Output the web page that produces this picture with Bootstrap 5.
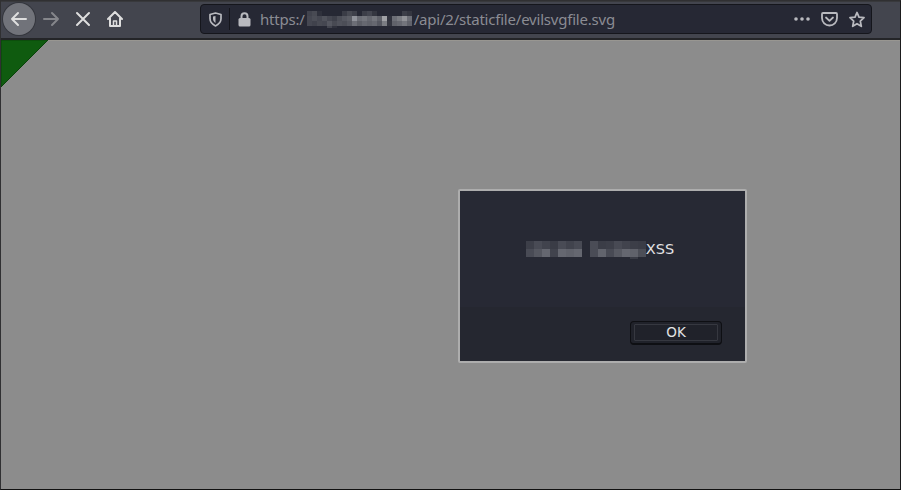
<!DOCTYPE html>
<html lang="en">
<head>
<meta charset="utf-8">
<meta name="viewport" content="width=device-width, initial-scale=1">
<title>evilsvgfile.svg</title>
<link href="https://cdn.jsdelivr.net/npm/bootstrap@5.3.0/dist/css/bootstrap.min.css" rel="stylesheet">
<style>
html, body { height: 100%; }
body { background: #8c8c8c; overflow: hidden; font-family: "Noto Sans", sans-serif; }
.browser { height: 490px; border: 1px solid #303032; border-right-color: #1b1b1d; border-bottom-color: #111; }
.toolbar { height: 39px; padding-bottom: 2px; background: #43454e; border-top: 1px solid #38393c; border-bottom: 2px solid #242528; flex: none; }
.tool { width: 32px; height: 32px; padding: 0; border: 0; border-radius: 50%; color: #dedede; display: flex; align-items: center; justify-content: center; flex: none; }
.tool.back { background: #71737a; box-shadow: 0 0 0 1px #34363d; margin-left: 1.5px; }
.tool.forward { color: #85868b; }
.tool svg, .address svg { display: block; flex: none; }
.address { width: 672px; height: 30px; margin-left: 69.5px; padding-right: 5px; background: #262834; border: 1px solid #15161c; border-radius: 4px; color: #b9babf; }
.split { width: 1px; height: 22px; background: #14151b; margin: 0 8px 0 7px; }
.url { font-size: 15px; letter-spacing: -.21px; line-height: 22px; color: #8b8c93; white-space: pre; margin-left: 9px; }
#hostMosaic { margin-left: -3px; margin-top: 1px; }
.page-icons { gap: 10px; }
.viewport { background: #8c8c8c; border-top: 1px solid #989691; }
.shape { display: block; margin-top: -1px; }
.alert-box { left: 457px; top: 148px; width: 289px; height: 174px; background: #272934; border: 2px solid #adadad; border-radius: 2px; font-family: "DejaVu Sans", sans-serif; color: #e2e2e4; }
.alert-text { height: 116px; padding-top: 2px; padding-right: 5px; font-size: 14.5px; }
.alert-actions { background: #252730; padding-right: 23px; padding-bottom: 2px; }
.ok { width: 92px; height: 24px; padding: 2px 3px; background: #20222a; border: 1px solid #0e0f13; border-bottom-width: 2px; border-radius: 4px; color: #e2e2e4; font-size: 13.5px; }
.ok span { display: flex; align-items: center; justify-content: center; height: 100%; border: 1px solid #363840; border-radius: 1px; }
</style>
<script src="https://cdn.jsdelivr.net/npm/bootstrap@5.3.0/dist/js/bootstrap.bundle.min.js"></script>
</head>
<body>
<div class="browser d-flex flex-column">
  <nav class="toolbar d-flex align-items-center" aria-label="Browser">
    <button class="tool back" aria-label="Back"><svg width="18" height="16" viewBox="0 0 18 16" fill="none" stroke="currentColor" stroke-width="2" stroke-linecap="round" stroke-linejoin="round"><path d="M16 8H2M8 2 2 8l6 6"/></svg></button>
    <button class="tool forward bg-transparent" aria-label="Forward"><svg width="18" height="16" viewBox="0 0 18 16" fill="none" stroke="currentColor" stroke-width="2" stroke-linecap="round" stroke-linejoin="round"><path d="M2 8h14M10 2l6 6-6 6"/></svg></button>
    <button class="tool bg-transparent" aria-label="Stop"><svg width="16" height="16" viewBox="0 0 16 16" fill="none" stroke="currentColor" stroke-width="2" stroke-linecap="round"><path d="m2 2 12 12M14 2 2 14"/></svg></button>
    <button class="tool bg-transparent" aria-label="Home"><svg width="16" height="16" viewBox="0 0 16 16" fill="none" stroke="currentColor" stroke-width="2" stroke-linecap="round" stroke-linejoin="round"><path d="M1 8l7-7 7 7M3 7.500V15h10V7.500"/><path d="M6.500 15v-5h3v5" stroke-width="1.500"/></svg></button>
    <div class="address d-flex align-items-center">
      <svg class="ms-2" width="13" height="15" viewBox="0 0 13 15" fill="none" stroke="currentColor" stroke-width="1.700" stroke-linejoin="round"><path d="M6.500 1 12 2.500v4c0 3.500-2.500 6-5.500 7.500C3.500 12.500 1 10 1 6.500v-4z"/><path d="M6.500 4v7C4.800 9.800 4 8.500 4 6.500v-2z" fill="currentColor" stroke="none"/></svg>
      <div class="split"></div>
      <svg width="13" height="15" viewBox="0 0 13 15"><rect x=".5" y="6" width="12" height="8.500" rx="1.500" fill="currentColor"/><path d="M3.500 7V4.200a3 3 0 0 1 6 0V7" fill="none" stroke="currentColor" stroke-width="2"/></svg>
      <div class="url d-flex align-items-center"><span>https:/</span><svg id="hostMosaic" width="112" height="17" aria-label="Hidden host"></svg><span>/api/2/staticfile/evilsvgfile.svg</span></div>
      <div class="page-icons d-flex align-items-center ms-auto">
        <svg width="18" height="16" viewBox="0 0 18 16" fill="currentColor"><circle cx="3" cy="8" r="1.800"/><circle cx="9" cy="8" r="1.800"/><circle cx="15" cy="8" r="1.800"/></svg>
        <svg width="17" height="15" viewBox="0 0 17 15" fill="none" stroke="currentColor" stroke-width="1.800" stroke-linecap="round" stroke-linejoin="round"><path d="M2 1h13q1 0 1 1v4a7.500 7.500 0 0 1-15 0V2q0-1 1-1zM5 5.500l3.500 3.300L12 5.500"/></svg>
        <svg width="18" height="17" viewBox="0 0 18 17" fill="none" stroke="currentColor" stroke-width="1.800" stroke-linejoin="round"><path d="m9 1.500 2 4.700 5 .5-3.700 3.400 1 5.200L9 12.700l-4.300 2.600 1-5.200L2 6.700l5-.5z"/></svg>
      </div>
    </div>
  </nav>
  <main class="viewport position-relative flex-grow-1">
    <svg class="shape" width="50" height="50"><path d="M0 0H47L0 47z" fill="#0f5b0f" stroke="#0a420a"/></svg>
    <section class="alert-box position-absolute d-flex flex-column" role="dialog" aria-label="Alert">
      <div class="alert-text d-flex align-items-center justify-content-center"><svg id="textMosaic" width="120" height="18" aria-label="Hidden text"></svg><span>XSS</span></div>
      <div class="alert-actions d-flex align-items-center justify-content-end flex-grow-1"><button class="ok"><span>OK</span></button></div>
    </section>
  </main>
</div>
<script>
function mosaic(id, size, rows) {
  const svg = document.getElementById(id);
  rows.forEach((row, y) => row.forEach((color, x) => {
    if (!color) return;
    const r = document.createElementNS('http://www.w3.org/2000/svg', 'rect');
    r.setAttribute('x', x * size);
    r.setAttribute('y', y * size);
    r.setAttribute('width', size);
    r.setAttribute('height', size);
    r.setAttribute('fill', '#' + color);
    svg.appendChild(r);
  }));
}
mosaic('hostMosaic', 5, [
  [0,'41434d','484a53','2f313c',0,0,0,0,'3a3c46','484a53','3e404a',0,'3c3e48','444650','343640',0,0,0,0,0,'3c3e48','343640'],
  [0,'454751','4c4e57','454751','50525b','454751','3e404a','4c4e57','555760','5c5e66','90929a','6c6e76','73757c','666870','73757c','60626a','a0a1a5','30323d','6c6e76','7b7d83','919297','6c6e76'],
  [0,'454751','40424c','484a53','454751','555760','484a53','50525b','4c4e57','555760','6c6e76','5c5e66','666870','60626a','666870','555760','7b7d83','343640','60626a','666870','73757c','60626a'],
  [0,0,0,0,0,'444650','30323d']
]);
mosaic('textMosaic', 8, [
  ['3d3f49','494b55','41434d','3a3c46','494b55','41434d','484a54',0,'4a4c56','3b3d47','3d3f49','484a54','41434d','3c3e48','3a3c46'],
  ['494b55','555760','656770','41434d','656770','60626b','656770',0,'4a4c56','62646d','484a54','575962','656770','60626b','4c4e57'],
  [0,0,0,0,0,0,0,0,0,0,0,0,0,'3a3c46']
]);
</script>
</body>
</html>
